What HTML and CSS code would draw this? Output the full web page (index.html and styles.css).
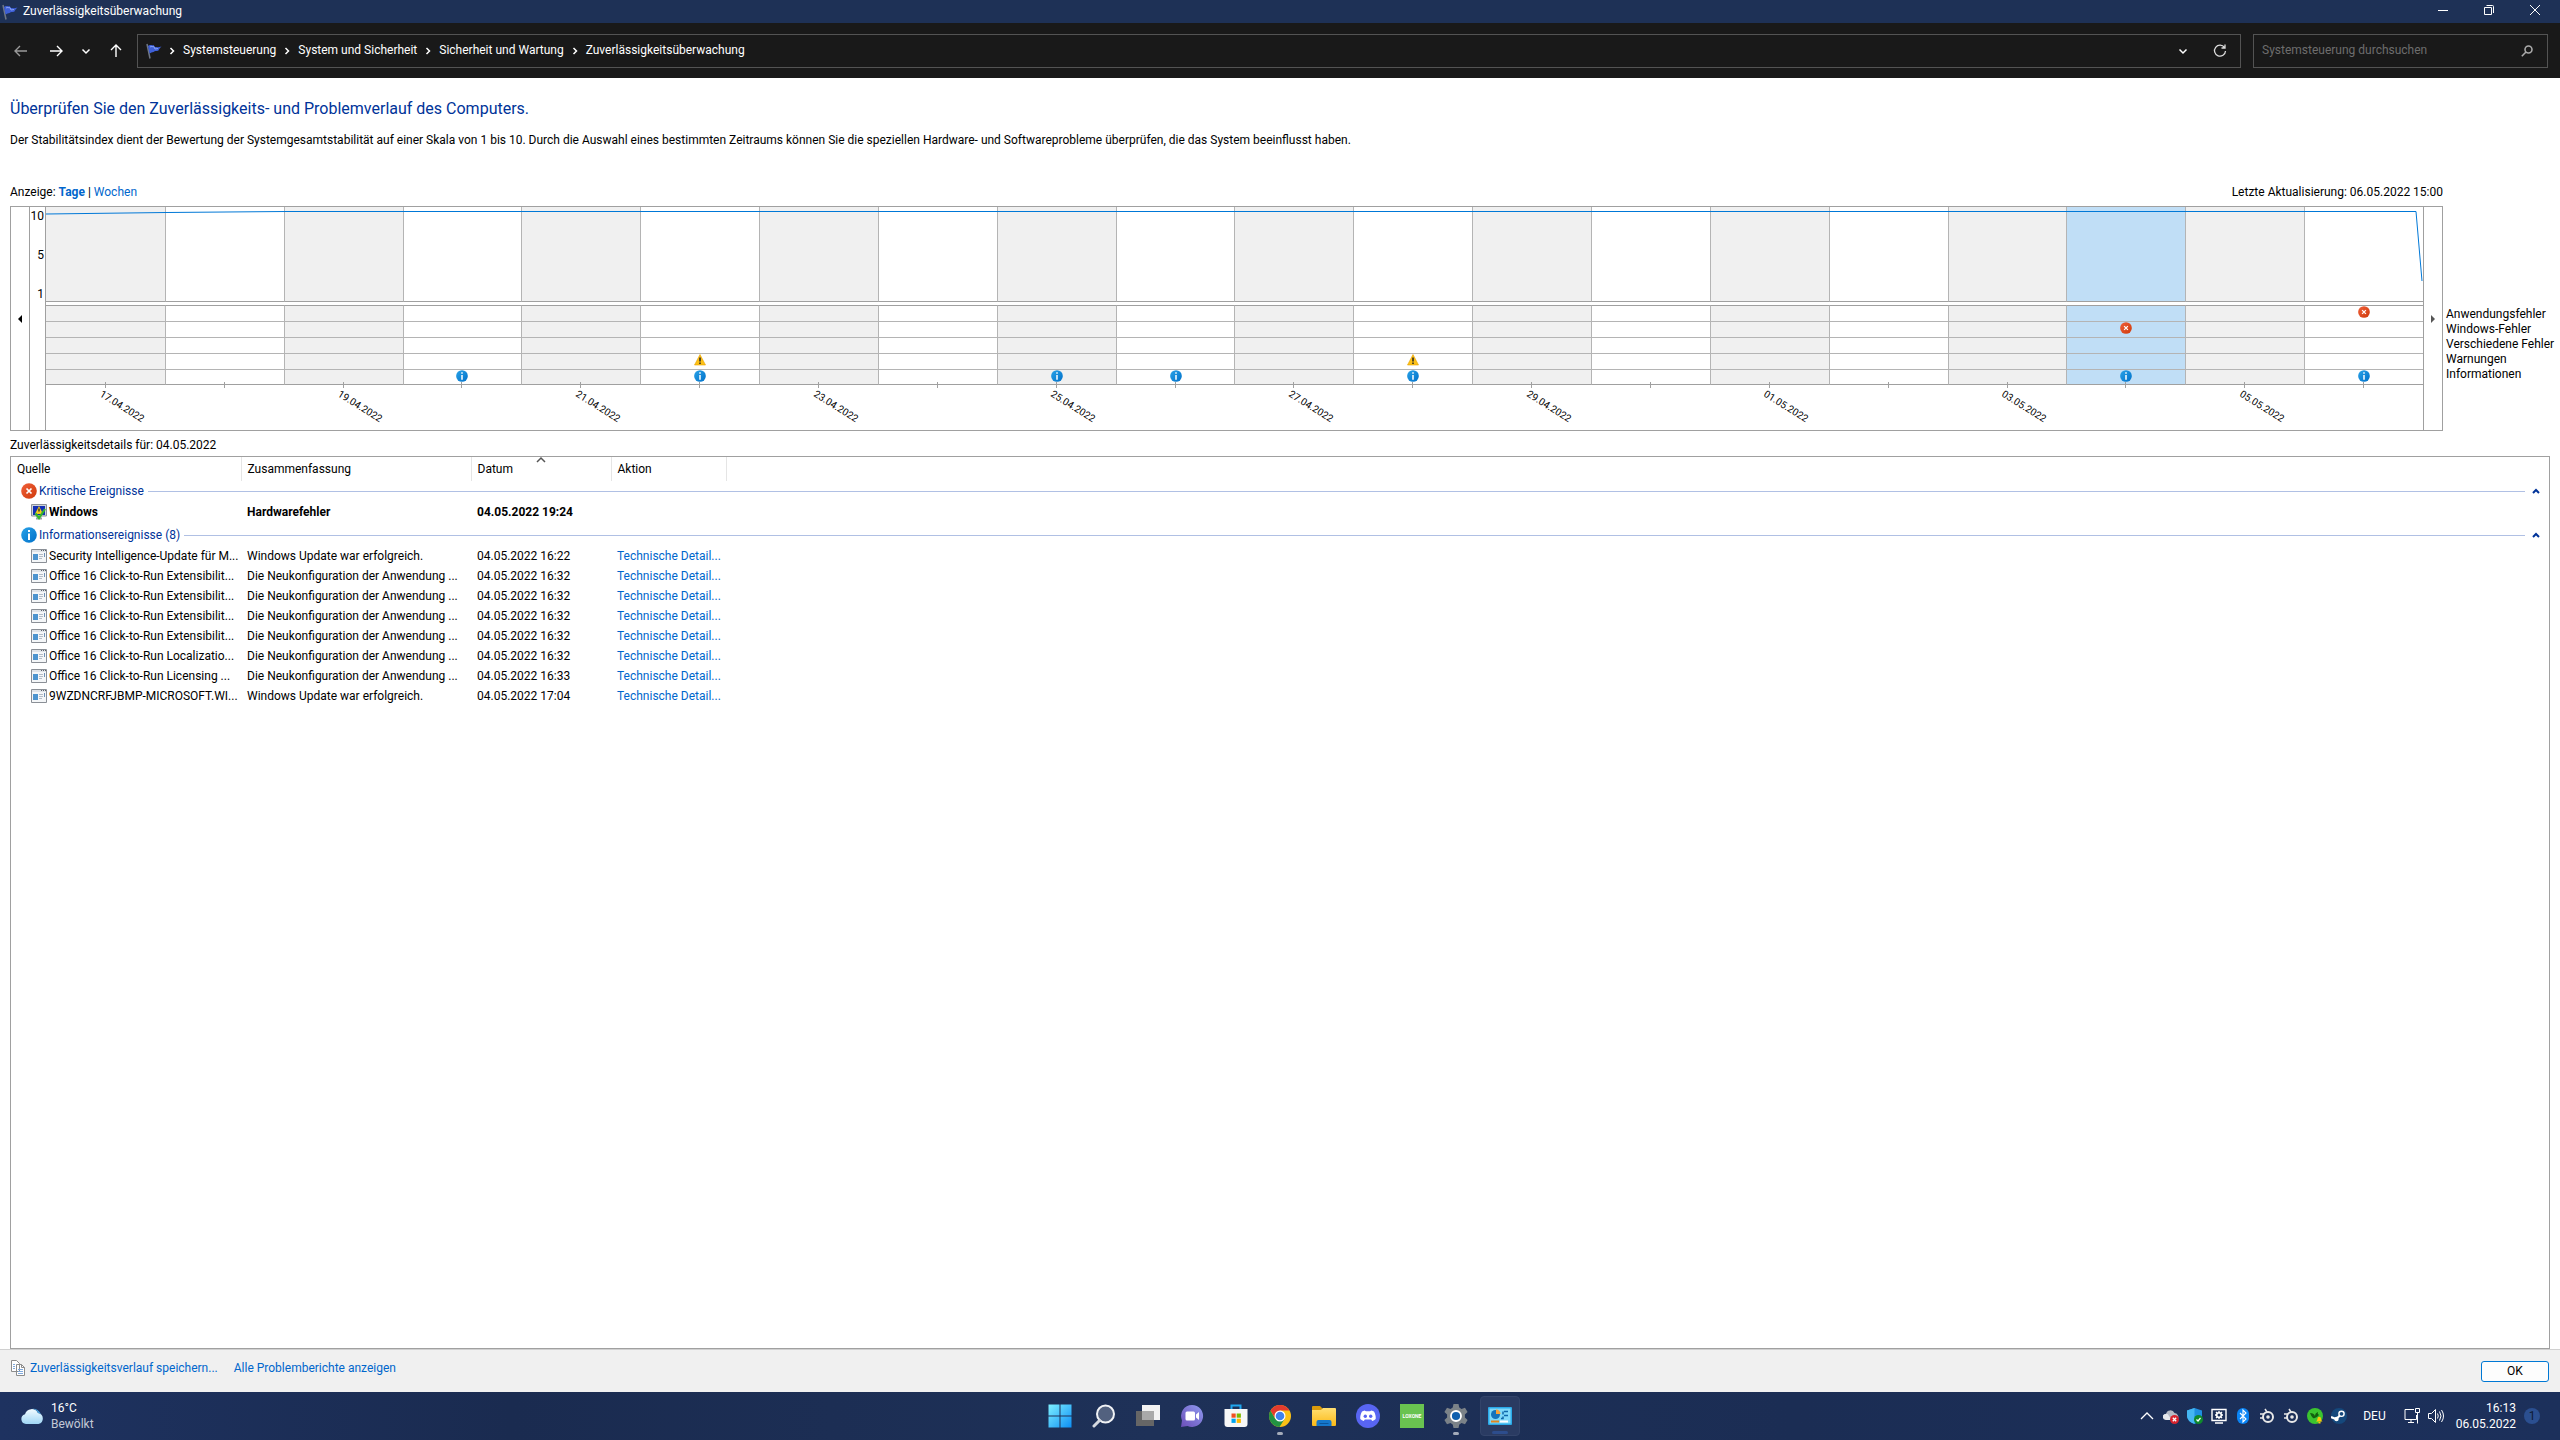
FILE: index.html
```
<!DOCTYPE html>
<html lang="de">
<head>
    <meta charset="utf-8">
    <meta name="viewport" content="width=device-width, initial-scale=1.0">
    <title>Zuverlässigkeitsüberwachung</title>
    <link rel="stylesheet" href="styles.css">
</head>
<body>
    <!-- Icons -->
    <svg class="sprite" aria-hidden="true">
        <defs>
            <linearGradient id="g-red" x1="0" y1="0" x2="1" y2="1"><stop offset="0" stop-color="#f0603a"/><stop offset="1" stop-color="#cf3a0a"/></linearGradient>
            <linearGradient id="g-blue" x1="0" y1="0" x2="1" y2="1"><stop offset="0" stop-color="#2aa3e8"/><stop offset="1" stop-color="#0070c9"/></linearGradient>
            <linearGradient id="g-win" x1="0" y1="0" x2="1" y2="1"><stop offset="0" stop-color="#7ef0ff"/><stop offset="1" stop-color="#0d8ff5"/></linearGradient>
            <linearGradient id="g-cloud" x1="0" y1="0" x2="0" y2="1"><stop offset="0" stop-color="#f2fbff"/><stop offset="1" stop-color="#9fd6f5"/></linearGradient>
            <linearGradient id="g-chat" x1="0" y1="1" x2="1" y2="0"><stop offset="0" stop-color="#6b4fb8"/><stop offset="1" stop-color="#8f9af0"/></linearGradient>
            <linearGradient id="g-folder" x1="0" y1="0" x2="0" y2="1"><stop offset="0" stop-color="#ffdf73"/><stop offset="1" stop-color="#fbb916"/></linearGradient>
        </defs>
        <symbol id="flag" viewBox="0 0 16 16">
            <path d="M1 1 4 15.500" stroke="#6f7785" stroke-width="1.500"/>
            <path d="M2 3c2-2 4 0 5.500-1l1.500 2c2 0 3.500.5 6.500-.5-1.500 1.500-2.500 2.500-3 4-2 1-3.500 0-5 1.500-1.500.5-2.500.5-4 1.500z" fill="#3e5fd6"/>
            <path d="M4 4c1.500-1 2.500 0 4-.3l1 2.300 3-.5" stroke="#8ba4f4" stroke-width="1" fill="none"/>
        </symbol>
        <symbol id="error" viewBox="0 0 16 16">
            <circle cx="8" cy="8" r="7.800" fill="url(#g-red)"/>
            <path d="M5.500 5.500l5 5M10.500 5.500l-5 5" stroke="#fff" stroke-width="1.700"/>
        </symbol>
        <symbol id="info" viewBox="0 0 16 16">
            <circle cx="8" cy="8" r="7.800" fill="url(#g-blue)"/>
            <path d="M8 3v2M8 6.500V13" stroke="#fff" stroke-width="2"/>
        </symbol>
        <symbol id="warning" viewBox="0 0 12 12">
            <path d="M6 .5 11.500 11H.5z" fill="#fdc116" stroke="#e8a200" stroke-width=".6" stroke-linejoin="round"/>
            <path d="M6 3.500v4M6 8.500v1.500" stroke="#222" stroke-width="1.500"/>
        </symbol>
        <symbol id="app" viewBox="0 0 16 14">
            <path d="M.5.5h15v13H.5z" fill="#f4f6f8" stroke="#8a8f96"/>
            <path d="M1 1h14v2H1z" fill="#dfe3e8"/>
            <path d="M10 1.500h1M12 1.500h1M14 1.500h1" stroke="#5b6068"/>
            <path d="M2 5h5v6H2z" fill="#4d94cf"/>
            <path d="M8 5.500h4M8 7.500h4M8 9.500h3" stroke="#b4bcc6"/>
            <path d="M13.500 4v4" stroke="#6d8fb5"/>
        </symbol>
        <symbol id="monitor" viewBox="0 0 16 16">
            <path d="M.5.500h15v11.500H.5z" fill="#cfd3d8" stroke="#8d9299"/>
            <path d="M2 2h12v9H2z" fill="#1330b5"/>
            <path d="M5 14.500h6M8 12v2" stroke="#9ba0a7" stroke-width="2"/>
            <path d="M8 2 12 10H4z" fill="#f6c91c"/>
            <path d="M8 4.500v3" stroke="#222" stroke-width="1.300"/>
            <path d="M4.500 9.500 8 14l6-9" fill="none" stroke="#35b52c" stroke-width="2.200"/>
        </symbol>
        <symbol id="chevron-down" viewBox="0 0 10 10"><path d="M1.500 3.500 5 7l3.500-3.500" fill="none" stroke="currentColor" stroke-width="1.500"/></symbol>
        <symbol id="chevron-up" viewBox="0 0 10 10"><path d="M1 7l4-4 4 4" fill="none" stroke="currentColor" stroke-width="1.500"/></symbol>
        <symbol id="collapse" viewBox="0 0 10 10"><path d="M2 7l3-3 3 3" fill="none" stroke="currentColor" stroke-width="2"/></symbol>
        <symbol id="chevron-right" viewBox="0 0 6 8"><path d="M1.500 1l3 3-3 3" fill="none" stroke="currentColor" stroke-width="1.500"/></symbol>
        <symbol id="arrow-right" viewBox="0 0 14 14"><path d="M1 7h12M8 2l5 5-5 5" fill="none" stroke="currentColor" stroke-width="1.400"/></symbol>
        <symbol id="arrow-left" viewBox="0 0 14 14"><path d="M13 7H1M6 2 1 7l5 5" fill="none" stroke="currentColor" stroke-width="1.400"/></symbol>
        <symbol id="arrow-up" viewBox="0 0 14 14"><path d="M7 13V1M2 6l5-5 5 5" fill="none" stroke="currentColor" stroke-width="1.400"/></symbol>
        <symbol id="mouse" viewBox="0 0 16 16">
            <circle cx="9" cy="9" r="5" fill="none" stroke="#e8e8e8" stroke-width="2"/>
            <circle cx="9" cy="9" r="1.800" fill="#e8e8e8"/>
            <path d="M1 6h4M6 1l2 3M1 10h3" stroke="#e8e8e8" stroke-width="1.500"/>
        </symbol>
        <symbol id="gear" viewBox="0 0 24 24">
            <path d="M9.500 0h5l.8 3.600 2.200 1.300 3.500-1.200 2.600 4.400-2.700 2.500v2.800l2.700 2.500-2.600 4.400-3.500-1.200-2.200 1.300-.8 3.600h-5l-.8-3.600-2.200-1.300L3 20.300.4 15.900l2.700-2.500v-2.800L.4 8.100 3 3.700l3.500 1.200 2.200-1.300z" fill="#7b8288"/>
            <circle cx="12" cy="12" r="5" fill="#0f5fae" stroke="#fff" stroke-width="1.800"/>
        </symbol>
    </svg>

    <div class="window">
        <header class="titlebar">
            <svg class="icon-16"><use href="#flag"/></svg>
            <span class="titlebar-text">Zuverlässigkeitsüberwachung</span>
            <div class="window-controls">
                <button aria-label="Minimieren"><svg class="icon-12" viewBox="0 0 12 12"><path d="M1 6.500h10" stroke="#fff"/></svg></button>
                <button aria-label="Verkleinern"><svg class="icon-12" viewBox="0 0 12 12"><path d="M1.500 3.500h7v7h-7zM3.500 1.500h6q1 0 1 1v6.500" fill="none" stroke="#fff"/></svg></button>
                <button aria-label="Schließen"><svg class="icon-12" viewBox="0 0 12 12"><path d="M1 1l10 10M11 1 1 11" stroke="#fff"/></svg></button>
            </div>
        </header>

        <nav class="navbar">
            <button class="nav-btn nav-btn-muted" aria-label="Zurück"><svg class="icon-14"><use href="#arrow-left"/></svg></button>
            <button class="nav-btn" aria-label="Vorwärts"><svg class="icon-14"><use href="#arrow-right"/></svg></button>
            <button class="nav-btn nav-btn-small" aria-label="Verlauf"><svg class="icon-10"><use href="#chevron-down"/></svg></button>
            <button class="nav-btn" aria-label="Nach oben"><svg class="icon-14"><use href="#arrow-up"/></svg></button>
            <div class="address">
                <svg class="icon-16"><use href="#flag"/></svg>
                <ol class="breadcrumb">
                    <li><svg class="crumb-arrow"><use href="#chevron-right"/></svg><a href="#">Systemsteuerung</a></li>
                    <li><svg class="crumb-arrow"><use href="#chevron-right"/></svg><a href="#">System und Sicherheit</a></li>
                    <li><svg class="crumb-arrow"><use href="#chevron-right"/></svg><a href="#">Sicherheit und Wartung</a></li>
                    <li><svg class="crumb-arrow"><use href="#chevron-right"/></svg><a href="#">Zuverlässigkeitsüberwachung</a></li>
                </ol>
                <button class="address-btn" aria-label="Vorherige Orte"><svg class="icon-10"><use href="#chevron-down"/></svg></button>
                <button class="address-btn" aria-label="Aktualisieren"><svg class="icon-14" viewBox="0 0 14 14"><path d="M11.500 3.500A5.500 5.500 0 1 0 12.500 7M12 .5v3.500H8.500" fill="none" stroke="#ddd" stroke-width="1.300"/></svg></button>
            </div>
            <div class="search">
                <input type="search" aria-label="Systemsteuerung durchsuchen" placeholder="Systemsteuerung durchsuchen">
                <svg class="icon-12" viewBox="0 0 12 12"><circle cx="7.500" cy="4.500" r="3.500" fill="none" stroke="#aaa" stroke-width="1.600"/><path d="M5 7 .8 11.200" stroke="#aaa" stroke-width="1.600"/></svg>
            </div>
        </nav>

        <main class="content">
            <h1 class="title">Überprüfen Sie den Zuverlässigkeits- und Problemverlauf des Computers.</h1>
            <p class="description">Der Stabilitätsindex dient der Bewertung der Systemgesamtstabilität auf einer Skala von 1 bis 10. Durch die Auswahl eines bestimmten Zeitraums können Sie die speziellen Hardware- und Softwareprobleme überprüfen, die das System beeinflusst haben.</p>

            <section class="chart-grid">
                <div class="chart-bar">
                    <span>Anzeige: <a href="#" class="active">Tage</a> | <a href="#">Wochen</a></span>
                    <span>Letzte Aktualisierung: 06.05.2022 15:00</span>
                </div>
                <div class="chart">
                    <button class="chart-prev" aria-label="Früher"><svg class="icon-8" viewBox="0 0 8 8"><path d="M6 0v8L2 4z"/></svg></button>
                    <div class="axis"><span>10</span><span>5</span><span>1</span></div>
                    <div class="plot">
                        <div class="day"><div class="index"></div><div class="events"></div><div class="date"><span>17.04.2022</span></div></div>
                        <div class="day"><div class="index"></div><div class="events"></div><div class="date"></div></div>
                        <div class="day"><div class="index"></div><div class="events"></div><div class="date"><span>19.04.2022</span></div></div>
                        <div class="day"><div class="index"></div><div class="events"><svg class="mark row-5"><use href="#info"/></svg></div><div class="date"></div></div>
                        <div class="day"><div class="index"></div><div class="events"></div><div class="date"><span>21.04.2022</span></div></div>
                        <div class="day"><div class="index"></div><div class="events"><svg class="mark row-4"><use href="#warning"/></svg><svg class="mark row-5"><use href="#info"/></svg></div><div class="date"></div></div>
                        <div class="day"><div class="index"></div><div class="events"></div><div class="date"><span>23.04.2022</span></div></div>
                        <div class="day"><div class="index"></div><div class="events"></div><div class="date"></div></div>
                        <div class="day"><div class="index"></div><div class="events"><svg class="mark row-5"><use href="#info"/></svg></div><div class="date"><span>25.04.2022</span></div></div>
                        <div class="day"><div class="index"></div><div class="events"><svg class="mark row-5"><use href="#info"/></svg></div><div class="date"></div></div>
                        <div class="day"><div class="index"></div><div class="events"></div><div class="date"><span>27.04.2022</span></div></div>
                        <div class="day"><div class="index"></div><div class="events"><svg class="mark row-4"><use href="#warning"/></svg><svg class="mark row-5"><use href="#info"/></svg></div><div class="date"></div></div>
                        <div class="day"><div class="index"></div><div class="events"></div><div class="date"><span>29.04.2022</span></div></div>
                        <div class="day"><div class="index"></div><div class="events"></div><div class="date"></div></div>
                        <div class="day"><div class="index"></div><div class="events"></div><div class="date"><span>01.05.2022</span></div></div>
                        <div class="day"><div class="index"></div><div class="events"></div><div class="date"></div></div>
                        <div class="day"><div class="index"></div><div class="events"></div><div class="date"><span>03.05.2022</span></div></div>
                        <div class="day selected"><div class="index"></div><div class="events"><svg class="mark row-2"><use href="#error"/></svg><svg class="mark row-5"><use href="#info"/></svg></div><div class="date"></div></div>
                        <div class="day"><div class="index"></div><div class="events"></div><div class="date"><span>05.05.2022</span></div></div>
                        <div class="day"><div class="index"></div><div class="events"><svg class="mark row-1"><use href="#error"/></svg><svg class="mark row-5"><use href="#info"/></svg></div><div class="date"></div></div>
                        <svg class="line" viewBox="0 0 2377 95" preserveAspectRatio="none"><path d="M0 7 120 5.500 240 4.500H2370L2376 74" fill="none" stroke="#0078d7" vector-effect="non-scaling-stroke"/></svg>
                    </div>
                    <button class="chart-next" aria-label="Später"><svg class="icon-8" viewBox="0 0 8 8"><path d="M2 0v8l4-4z" fill="#555"/></svg></button>
                </div>
                <ul class="legend">
                    <li>Anwendungsfehler</li>
                    <li>Windows-Fehler</li>
                    <li>Verschiedene Fehler</li>
                    <li>Warnungen</li>
                    <li>Informationen</li>
                </ul>
            </section>

            <h2 class="details-title">Zuverlässigkeitsdetails für: 04.05.2022</h2>
            <div class="details">
                <table>
                    <colgroup><col class="col-source"><col class="col-summary"><col class="col-date"><col class="col-action"><col></colgroup>
                    <thead>
                        <tr><th>Quelle</th><th>Zusammenfassung</th><th>Datum<svg class="sort"><use href="#chevron-up"/></svg></th><th>Aktion</th><td></td></tr>
                    </thead>
                    <tbody class="critical">
                        <tr class="group"><th colspan="5"><div><svg class="icon-16"><use href="#error"/></svg>Kritische Ereignisse<button aria-label="Kritische Ereignisse einklappen"><svg class="icon-10"><use href="#collapse"/></svg></button></div></th></tr>
                        <tr><td><svg class="icon-16"><use href="#monitor"/></svg>Windows</td><td>Hardwarefehler</td><td>04.05.2022 19:24</td><td></td><td></td></tr>
                    </tbody>
                    <tbody class="informational">
                        <tr class="group"><th colspan="5"><div><svg class="icon-16"><use href="#info"/></svg>Informationsereignisse (8)<button aria-label="Informationsereignisse einklappen"><svg class="icon-10"><use href="#collapse"/></svg></button></div></th></tr>
                        <tr><td><svg class="icon-16"><use href="#app"/></svg>Security Intelligence-Update für M...</td><td>Windows Update war erfolgreich.</td><td>04.05.2022 16:22</td><td><a href="#">Technische Detail...</a></td><td></td></tr>
                        <tr><td><svg class="icon-16"><use href="#app"/></svg>Office 16 Click-to-Run Extensibilit...</td><td>Die Neukonfiguration der Anwendung ...</td><td>04.05.2022 16:32</td><td><a href="#">Technische Detail...</a></td><td></td></tr>
                        <tr><td><svg class="icon-16"><use href="#app"/></svg>Office 16 Click-to-Run Extensibilit...</td><td>Die Neukonfiguration der Anwendung ...</td><td>04.05.2022 16:32</td><td><a href="#">Technische Detail...</a></td><td></td></tr>
                        <tr><td><svg class="icon-16"><use href="#app"/></svg>Office 16 Click-to-Run Extensibilit...</td><td>Die Neukonfiguration der Anwendung ...</td><td>04.05.2022 16:32</td><td><a href="#">Technische Detail...</a></td><td></td></tr>
                        <tr><td><svg class="icon-16"><use href="#app"/></svg>Office 16 Click-to-Run Extensibilit...</td><td>Die Neukonfiguration der Anwendung ...</td><td>04.05.2022 16:32</td><td><a href="#">Technische Detail...</a></td><td></td></tr>
                        <tr><td><svg class="icon-16"><use href="#app"/></svg>Office 16 Click-to-Run Localizatio...</td><td>Die Neukonfiguration der Anwendung ...</td><td>04.05.2022 16:32</td><td><a href="#">Technische Detail...</a></td><td></td></tr>
                        <tr><td><svg class="icon-16"><use href="#app"/></svg>Office 16 Click-to-Run Licensing ...</td><td>Die Neukonfiguration der Anwendung ...</td><td>04.05.2022 16:33</td><td><a href="#">Technische Detail...</a></td><td></td></tr>
                        <tr><td><svg class="icon-16"><use href="#app"/></svg>9WZDNCRFJBMP-MICROSOFT.WI...</td><td>Windows Update war erfolgreich.</td><td>04.05.2022 17:04</td><td><a href="#">Technische Detail...</a></td><td></td></tr>
                    </tbody>
                </table>
            </div>
        </main>

        <footer class="actions">
            <svg class="icon-16" viewBox="0 0 16 16"><path d="M1.500.5h5l3 3v8h-8zM6.500 4.500h5l3 3v8h-8z" fill="#fff" stroke="#8c8c8c"/><path d="M11.500 4.500v3h3" fill="none" stroke="#8c8c8c"/><path d="M3 4.500h2M3 6.500h2M3 8.500h2M8 9.500h5M8 11.500h5M8 13.500h5" stroke="#7fa9dd"/></svg>
            <a href="#">Zuverlässigkeitsverlauf speichern...</a>
            <a href="#" class="reports">Alle Problemberichte anzeigen</a>
            <button class="ok-btn">OK</button>
        </footer>
    </div>

    <div class="taskbar">
        <button class="weather">
            <svg class="icon-24" viewBox="0 0 24 24"><path d="M6 20a5 5 0 0 1-1-9.800A7 7 0 0 1 18 9a5.600 5.600 0 0 1 .5 11z" fill="url(#g-cloud)"/><path d="M12 5a7 7 0 0 1 6 4 5 5 0 0 1 3 1.500A8 8 0 0 0 12 5z" fill="#4c9fd8"/></svg>
            <span>16°C<br><span class="weather-state">Bewölkt</span></span>
        </button>

        <div class="apps">
            <button aria-label="Start"><svg class="icon-24" viewBox="0 0 24 24"><path d="M.5.500h11v11H.5zM12.500.5h11v11h-11zM.5 12.500h11v11H.5zM12.500 12.500h11v11h-11z" fill="url(#g-win)"/></svg></button>
            <button aria-label="Suche"><svg class="icon-24" viewBox="0 0 24 24"><circle cx="13.500" cy="10" r="8.500" fill="#52617f" stroke="#f0f2f5" stroke-width="2"/><path d="M7.500 16.500 2 22" stroke="#d5d9e0" stroke-width="3" stroke-linecap="round"/></svg></button>
            <button aria-label="Taskansicht"><svg class="icon-24" viewBox="0 0 24 24"><path d="M0 7h18v15H0z" fill="#666"/><path d="M6 1h18v15H6z" fill="#f2f2f2"/><path d="M6 7h12v9H6z" fill="#a9a9a9"/></svg></button>
            <button aria-label="Chat"><svg class="icon-24" viewBox="0 0 24 24"><path d="M12 1a11 11 0 1 1-4.500 21L1 23l1-6.500A11 11 0 0 1 12 1z" fill="url(#g-chat)"/><rect x="5.500" y="7.500" width="9.500" height="9" rx="1.500" fill="#fff"/><path d="M16 10.500 19 8v8l-3-2.500z" fill="#fff"/></svg></button>
            <button aria-label="Microsoft Store"><svg class="icon-24" viewBox="0 0 24 24"><path d="M7.500 6V1.500h9V6" fill="none" stroke="#1fa6ee" stroke-width="2"/><path d="M.5 5h23v15q0 3-3 3h-17q-3 0-3-3z" fill="#f7f7f7"/><path d="M7.500 9.500h4.200v4.200H7.500z" fill="#f25022"/><path d="M12.700 9.500h4.200v4.200h-4.200z" fill="#7fba00"/><path d="M7.500 14.700h4.200v4.200H7.500z" fill="#00a4ef"/><path d="M12.700 14.700h4.200v4.200h-4.200z" fill="#ffb900"/></svg></button>
            <button aria-label="Google Chrome" class="running"><svg class="icon-24" viewBox="0 0 24 24"><circle cx="12" cy="12" r="11" fill="#fbc116"/><path d="M2.500 6.500A11 11 0 0 0 11.500 23l5.200-8.200L7.200 14.800z" fill="#229342"/><path d="M12 6.500h9.500A11 11 0 0 0 2.500 6.500L7 14z" fill="#e33b2e"/><circle cx="12" cy="12" r="5.500" fill="#fff"/><circle cx="12" cy="12" r="4.300" fill="#3f82ee"/></svg></button>
            <button aria-label="Explorer"><svg class="icon-24" viewBox="0 0 24 24"><path d="M0 3q0-1 1-1h7l3 3v4H0z" fill="#d99a0b"/><path d="M0 6h9l2-2h12q1 0 1 1v16q0 1-1 1H1q-1 0-1-1z" fill="url(#g-folder)"/><path d="M4.500 22v-4q0-2 2-2h11q2 0 2 2v4z" fill="#1577cc"/><path d="M7.500 19.500h9" stroke="#0b559c"/></svg></button>
            <button aria-label="Discord"><svg class="icon-24" viewBox="0 0 24 24"><circle cx="12" cy="12" r="12" fill="#5865f2"/><path d="M8.500 6.500 10 7.200h4l1.500-.7 2.500 1c1.300 2.300 2 5 1.700 7.500-1 1-2.200 1.500-3.500 2l-1-1.500H8.800l-1 1.500c-1.300-.5-2.500-1-3.500-2-.3-2.500.4-5.200 1.700-7.500z" fill="#fff"/><circle cx="9.300" cy="12.300" r="1.700" fill="#5865f2"/><circle cx="14.700" cy="12.300" r="1.700" fill="#5865f2"/></svg></button>
            <button aria-label="Loxone"><span class="loxone">LOXONE</span></button>
            <button aria-label="Einstellungen" class="running"><svg class="icon-24"><use href="#gear"/></svg></button>
            <button aria-label="Systemsteuerung" class="current"><svg class="icon-24" viewBox="0 0 24 24"><rect y="3" width="24" height="18" rx="1" fill="#2aa9e8"/><path d="M1.500 4.500h21v15h-21z" fill="#7fd8fa"/><circle cx="7.500" cy="10.500" r="4.500" fill="#1673bd"/><path d="M8 10V5.500a4.500 4.500 0 0 1 4.500 4.500z" fill="#f7a13a"/><path d="M3 17.500h8" stroke="#e0851c" stroke-width="2"/><path d="M12 17.500h8" stroke="#fff" stroke-width="2"/><path d="M13 14.500h2v-2M16 7.500h4M16 11.500h4M15 7.500v3" stroke="#0f67ab" stroke-width="1.500" fill="none"/></svg></button>
        </div>

        <div class="tray">
            <button aria-label="Ausgeblendete Symbole"><svg class="icon-16" viewBox="0 0 16 16"><path d="M2 11l6-6 6 6" fill="none" stroke="#fff" stroke-width="1.300"/></svg></button>
            <button aria-label="OneDrive"><svg class="icon-16" viewBox="0 0 16 16"><path d="M3 12a3 3 0 0 1 0-6 4.500 4.500 0 0 1 8.500-1 4 4 0 0 1 2.500 7z" fill="#b5bac4"/><path d="M0 10a3 3 0 0 1 6-2l3 4H3z" fill="#e6e8ec"/><circle cx="11.500" cy="11.500" r="4.500" fill="#d6232e"/><path d="M9.800 9.800l3.400 3.400M13.200 9.800l-3.400 3.400" stroke="#fff" stroke-width="1.300"/></svg></button>
            <button aria-label="Windows-Sicherheit"><svg class="icon-16" viewBox="0 0 16 16"><path d="M7.500 0 15 2.500V8q0 5-7.500 8Q0 13 0 8V2.500z" fill="#1f8fe0"/><path d="M7.500 0v16Q0 13 0 8V2.500z" fill="#45b6f2"/><circle cx="11.500" cy="11.500" r="4.500" fill="#0f8a2c"/><path d="M9.500 11.500l1.500 1.500 2.500-3" stroke="#fff" stroke-width="1.200" fill="none"/></svg></button>
            <button aria-label="Grafik"><svg class="icon-16" viewBox="0 0 16 16"><path d="M1 1.500h14v11H1zM4 15h8" fill="none" stroke="#fff" stroke-width="1.400"/><circle cx="8" cy="7" r="2.300" fill="none" stroke="#fff" stroke-width="1.600"/><path d="M8 3v2M8 9v2M4 7h2M10 7h2M5 4l1.500 1.500M11 4 9.500 5.500M5 10l1.500-1.500M11 10 9.500 8.500" stroke="#fff" stroke-width="1.300"/></svg></button>
            <button aria-label="Bluetooth"><svg class="icon-16" viewBox="0 0 16 16"><rect x="2" width="12" height="16" rx="6" fill="#0a84f5"/><path d="M5 5l6 6-3 3V2l3 3-6 6" fill="none" stroke="#fff" stroke-width="1.100"/></svg></button>
            <button aria-label="SteelSeries GG"><svg class="icon-16"><use href="#mouse"/></svg></button>
            <button aria-label="SteelSeries Engine"><svg class="icon-16"><use href="#mouse"/></svg></button>
            <button aria-label="Razer"><svg class="icon-16" viewBox="0 0 16 16"><circle cx="8" cy="8" r="8" fill="#3bc42f"/><path d="M3 5q4 0 5 3 0-3 3-4-1 2 1 3-3 4-6 3Q4 8 3 5z" fill="#12600e"/><path d="M9 13.500q1.500-1 1.500-3a1.700 1.700 0 0 1 3.500 0q0 2 1.500 3zM11.500 14h2v1.500h-2z" fill="#fdc40a"/></svg></button>
            <button aria-label="Steam"><svg class="icon-16" viewBox="0 0 16 16"><circle cx="8" cy="8" r="8" fill="#15487c"/><circle cx="10.500" cy="5.800" r="2.600" fill="none" stroke="#fff" stroke-width="1.400"/><path d="M0 9l5 2 4-3.500" stroke="#fff" stroke-width="2.200" fill="none"/><circle cx="5.500" cy="11" r="2.200" fill="#fff"/></svg></button>
            <button class="language">DEU</button>
            <button class="system" aria-label="Netzwerk und Lautstärke">
                <svg class="icon-16" viewBox="0 0 16 16"><path d="M10 1.500H1v10h11.500V7M4 14.500h6M7 11.500v3" fill="none" stroke="#fff"/><path d="M11.500.5h4v4h-4zM13.500 4.500v11" fill="none" stroke="#fff"/></svg>
                <svg class="icon-16" viewBox="0 0 16 16"><path d="M.5 5.500h3l4-4v13l-4-4h-3zM9.500 5.500q1.500 2.500 0 5M11.500 3.500q3 4.500 0 9M13.500 2q4 6 0 12" fill="none" stroke="#fff"/></svg>
            </button>
            <button class="clock">16:13<br>06.05.2022</button>
            <span class="badge">1</span>
        </div>
    </div>
</body>
</html>
```
FILE: styles.css
```
* {
    box-sizing: border-box;
}

body {
    display: flex;
    flex-direction: column;
    min-height: 100vh;
    margin: 0;
    background-color: #fff;
    color: #000;
    font-family: "Segoe UI", Roboto, "Open Sans", sans-serif;
    font-size: 12px;
    line-height: 15px;
}

button,
input {
    padding: 0;
    border: 0;
    background: none;
    color: inherit;
    font: inherit;
}

a {
    color: #0066cc;
    text-decoration: none;
}

svg {
    display: block;
    flex: none;
}

.sprite {
    position: absolute;
    width: 0;
    height: 0;
}

.icon-8 { width: 8px; height: 8px; }
.icon-10 { width: 10px; height: 10px; }
.icon-12 { width: 12px; height: 12px; }
.icon-14 { width: 14px; height: 14px; }
.icon-16 { width: 16px; height: 16px; }
.icon-24 { width: 24px; height: 24px; }

.window {
    display: flex;
    flex: 1;
    flex-direction: column;
}

/* Title bar */
.titlebar {
    display: flex;
    align-items: center;
    gap: 5px;
    height: 23px;
    padding: 0 2px;
    background-color: #1e3156;
    color: #fff;
}

.window-controls {
    display: flex;
    align-self: stretch;
    margin-left: auto;
}

.window-controls button {
    display: flex;
    justify-content: center;
    width: 46px;
    padding-top: 4px;
}

/* Navigation */
.navbar {
    display: flex;
    align-items: center;
    gap: 5px;
    height: 55px;
    padding: 0 12px 0 6px;
    background-color: #191919;
    color: #fff;
}

.nav-btn {
    display: flex;
    align-items: center;
    justify-content: center;
    width: 30px;
    height: 34px;
}

.nav-btn-muted {
    color: #9a9a9a;
}

.nav-btn-small {
    width: 20px;
}

.address,
.search {
    display: flex;
    align-items: center;
    height: 34px;
    border: 1px solid #535353;
}

.address {
    flex: 1;
    margin-left: 1px;
    padding: 0 2px 0 8px;
}

.breadcrumb {
    display: flex;
    flex: 1;
    gap: 8px;
    margin: 0;
    padding: 0 0 0 7px;
    list-style: none;
}

.breadcrumb li {
    display: flex;
    align-items: center;
    gap: 8px;
}

.breadcrumb a {
    color: #fff;
}

.crumb-arrow {
    width: 6px;
    height: 8px;
}

.address-btn {
    display: flex;
    align-items: center;
    justify-content: center;
    width: 37px;
    height: 32px;
}

.search {
    width: 295px;
    margin-left: 7px;
    padding: 0 14px 0 8px;
}

.search input {
    flex: 1;
    outline: none;
}

.search input::placeholder {
    color: #6d6d6d;
}

/* Content */
.content {
    display: flex;
    flex: 1;
    flex-direction: column;
    padding: 20px 10px 0;
}

.title {
    margin: 0;
    color: #003399;
    font-size: 16px;
    font-weight: 400;
    line-height: 22px;
}

.description {
    margin: 13px 0 37px;
}

/* Stability chart */
.chart-grid {
    display: grid;
    grid-template-columns: 1fr 104px;
    column-gap: 3px;
}

.chart-bar {
    display: flex;
    grid-column: 1;
    justify-content: space-between;
    padding-bottom: 6px;
}

.chart-bar .active {
    font-weight: 700;
}

.chart {
    display: flex;
    grid-column: 1;
    height: 225px;
    border: 1px solid #a0a0a0;
}

.chart-prev,
.chart-next {
    display: flex;
    align-items: center;
    justify-content: center;
    width: 18px;
}

.chart-next {
    width: 19px;
    border-left: 1px solid #a0a0a0;
}

.axis {
    display: flex;
    flex-direction: column;
    gap: 24px;
    width: 16px;
    padding: 2px 1px 0 0;
    border-left: 1px solid #a0a0a0;
    text-align: right;
}

.plot {
    position: relative;
    display: grid;
    flex: 1;
    grid-template-columns: repeat(20, 1fr);
    border-left: 1px solid #a0a0a0;
}

.index {
    height: 95px;
    margin-bottom: 3px;
    border-bottom: 1px solid #a0a0a0;
}

.events {
    display: grid;
    grid-template-rows: repeat(5, 16px);
    justify-items: center;
    height: 80px;
    border-top: 1px solid #a0a0a0;
    border-bottom: 1px solid #a0a0a0;
    background-image: repeating-linear-gradient(transparent 0 15px, #b4b4b4 15px 16px);
}

.day + .day .index,
.day + .day .events {
    border-left: 1px solid #b4b4b4;
}

.day:nth-child(odd) .index,
.day:nth-child(odd) .events {
    background-color: #f0f0f0;
}

.day.selected .index,
.day.selected .events {
    background-color: #c0def6;
}

.mark {
    width: 12px;
    height: 12px;
}

.row-1 { grid-row: 1; }
.row-2 { grid-row: 2; }
.row-4 { grid-row: 4; }
.row-5 { grid-row: 5; }

.date {
    display: flow-root;
    margin-top: -3px;
}

.date::before {
    display: block;
    width: 1px;
    height: 6px;
    margin: 0 auto;
    background-color: #a0a0a0;
    content: "";
}

.date span {
    display: block;
    width: 10px;
    margin: 0 auto;
    font-size: 10px;
    transform: rotate(32deg);
}

.line {
    position: absolute;
    top: 0;
    left: 0;
    width: 100%;
    height: 95px;
}

.legend {
    grid-column: 2;
    margin: 101px 0 0;
    padding: 0;
    list-style: none;
    white-space: nowrap;
}

/* Details list */
.details-title {
    margin: 7px 0 3px;
    font-size: 12px;
    font-weight: 400;
}

.details {
    flex: 1;
    border: 1px solid #a0a0a0;
}

.details table {
    width: 100%;
    border-collapse: collapse;
    line-height: 16px;
    table-layout: fixed;
}

.col-source,
.col-summary { width: 230px; }
.col-date { width: 140px; }
.col-action { width: 115px; }

.details th,
.details td {
    height: 20px;
    padding: 0 0 0 6px;
    font-weight: 400;
    text-align: left;
    white-space: nowrap;
}

.details thead th {
    position: relative;
    height: 24px;
    border-right: 1px solid #e5e5e5;
}

.sort {
    position: absolute;
    top: -2px;
    left: 64px;
    width: 10px;
    height: 10px;
    color: #555;
}

.details td .icon-16 {
    display: inline-block;
    margin: 0 2px 0 14px;
    vertical-align: top;
}

.details .critical td {
    height: 21px;
    font-weight: 700;
}

.details .group th {
    padding: 0 8px 0 10px;
    color: #003399;
}

.group div {
    display: flex;
    align-items: center;
    gap: 2px;
}

.group div::after {
    flex: 1;
    height: 1px;
    margin: 0 4px 0 2px;
    background-color: #b0c0e4;
    content: "";
}

.group button {
    order: 1;
}

.informational .group th {
    height: 24px;
    padding-top: 2px;
}

/* Footer */
.actions {
    display: flex;
    align-items: center;
    height: 43px;
    padding: 0 11px 0 10px;
    border-top: 1px solid #d0d0d0;
    background-color: #f0f0f0;
}

.actions a {
    margin: 0 0 6px 4px;
}

.actions .icon-16 {
    margin-bottom: 6px;
}

.actions .reports {
    margin-left: 16px;
}

.ok-btn {
    width: 68px;
    height: 21px;
    margin-left: auto;
    border: 1px solid #0078d4;
    border-radius: 3px;
    background-color: #fdfdfd;
}

/* Taskbar */
.taskbar {
    display: grid;
    grid-template-columns: 1fr auto 1fr;
    align-items: center;
    height: 48px;
    background: linear-gradient(90deg, #1e3260, #1a2b50 20%, #1e3158 45%, #1b2d54 70%, #1c305b);
    color: #fff;
}

.weather {
    display: flex;
    align-items: center;
    gap: 7px;
    padding-left: 20px;
    line-height: 16px;
    text-align: left;
}

.weather-state {
    color: #c3c9d6;
}

.apps {
    display: flex;
    gap: 4px;
}

.apps button {
    position: relative;
    display: flex;
    align-items: center;
    justify-content: center;
    width: 40px;
    height: 40px;
    border-radius: 4px;
}

.running::after,
.current::after {
    position: absolute;
    bottom: 1px;
    width: 6px;
    height: 3px;
    border-radius: 2px;
    background-color: #a4abb9;
    content: "";
}

.apps .current {
    border: 1px solid #33446a;
    background-color: #2a3b62;
}

.current::after {
    width: 16px;
    background-color: #2d4d8c;
}

.loxone {
    width: 24px;
    height: 24px;
    background-color: #69c350;
    color: #fff;
    font-size: 5px;
    font-weight: 700;
    line-height: 24px;
    text-align: center;
}

.tray {
    display: flex;
    align-items: center;
    justify-content: flex-end;
    gap: 8px;
    padding-right: 20px;
}

.language {
    margin: 0 10px 0 8px;
}

.system {
    display: flex;
    gap: 8px;
}

.clock {
    margin-left: 4px;
    line-height: 16px;
    text-align: right;
}

.badge {
    width: 16px;
    height: 16px;
    border-radius: 8px;
    background-color: #2b4f90;
    color: #0f1c36;
    line-height: 16px;
    text-align: center;
}
```
